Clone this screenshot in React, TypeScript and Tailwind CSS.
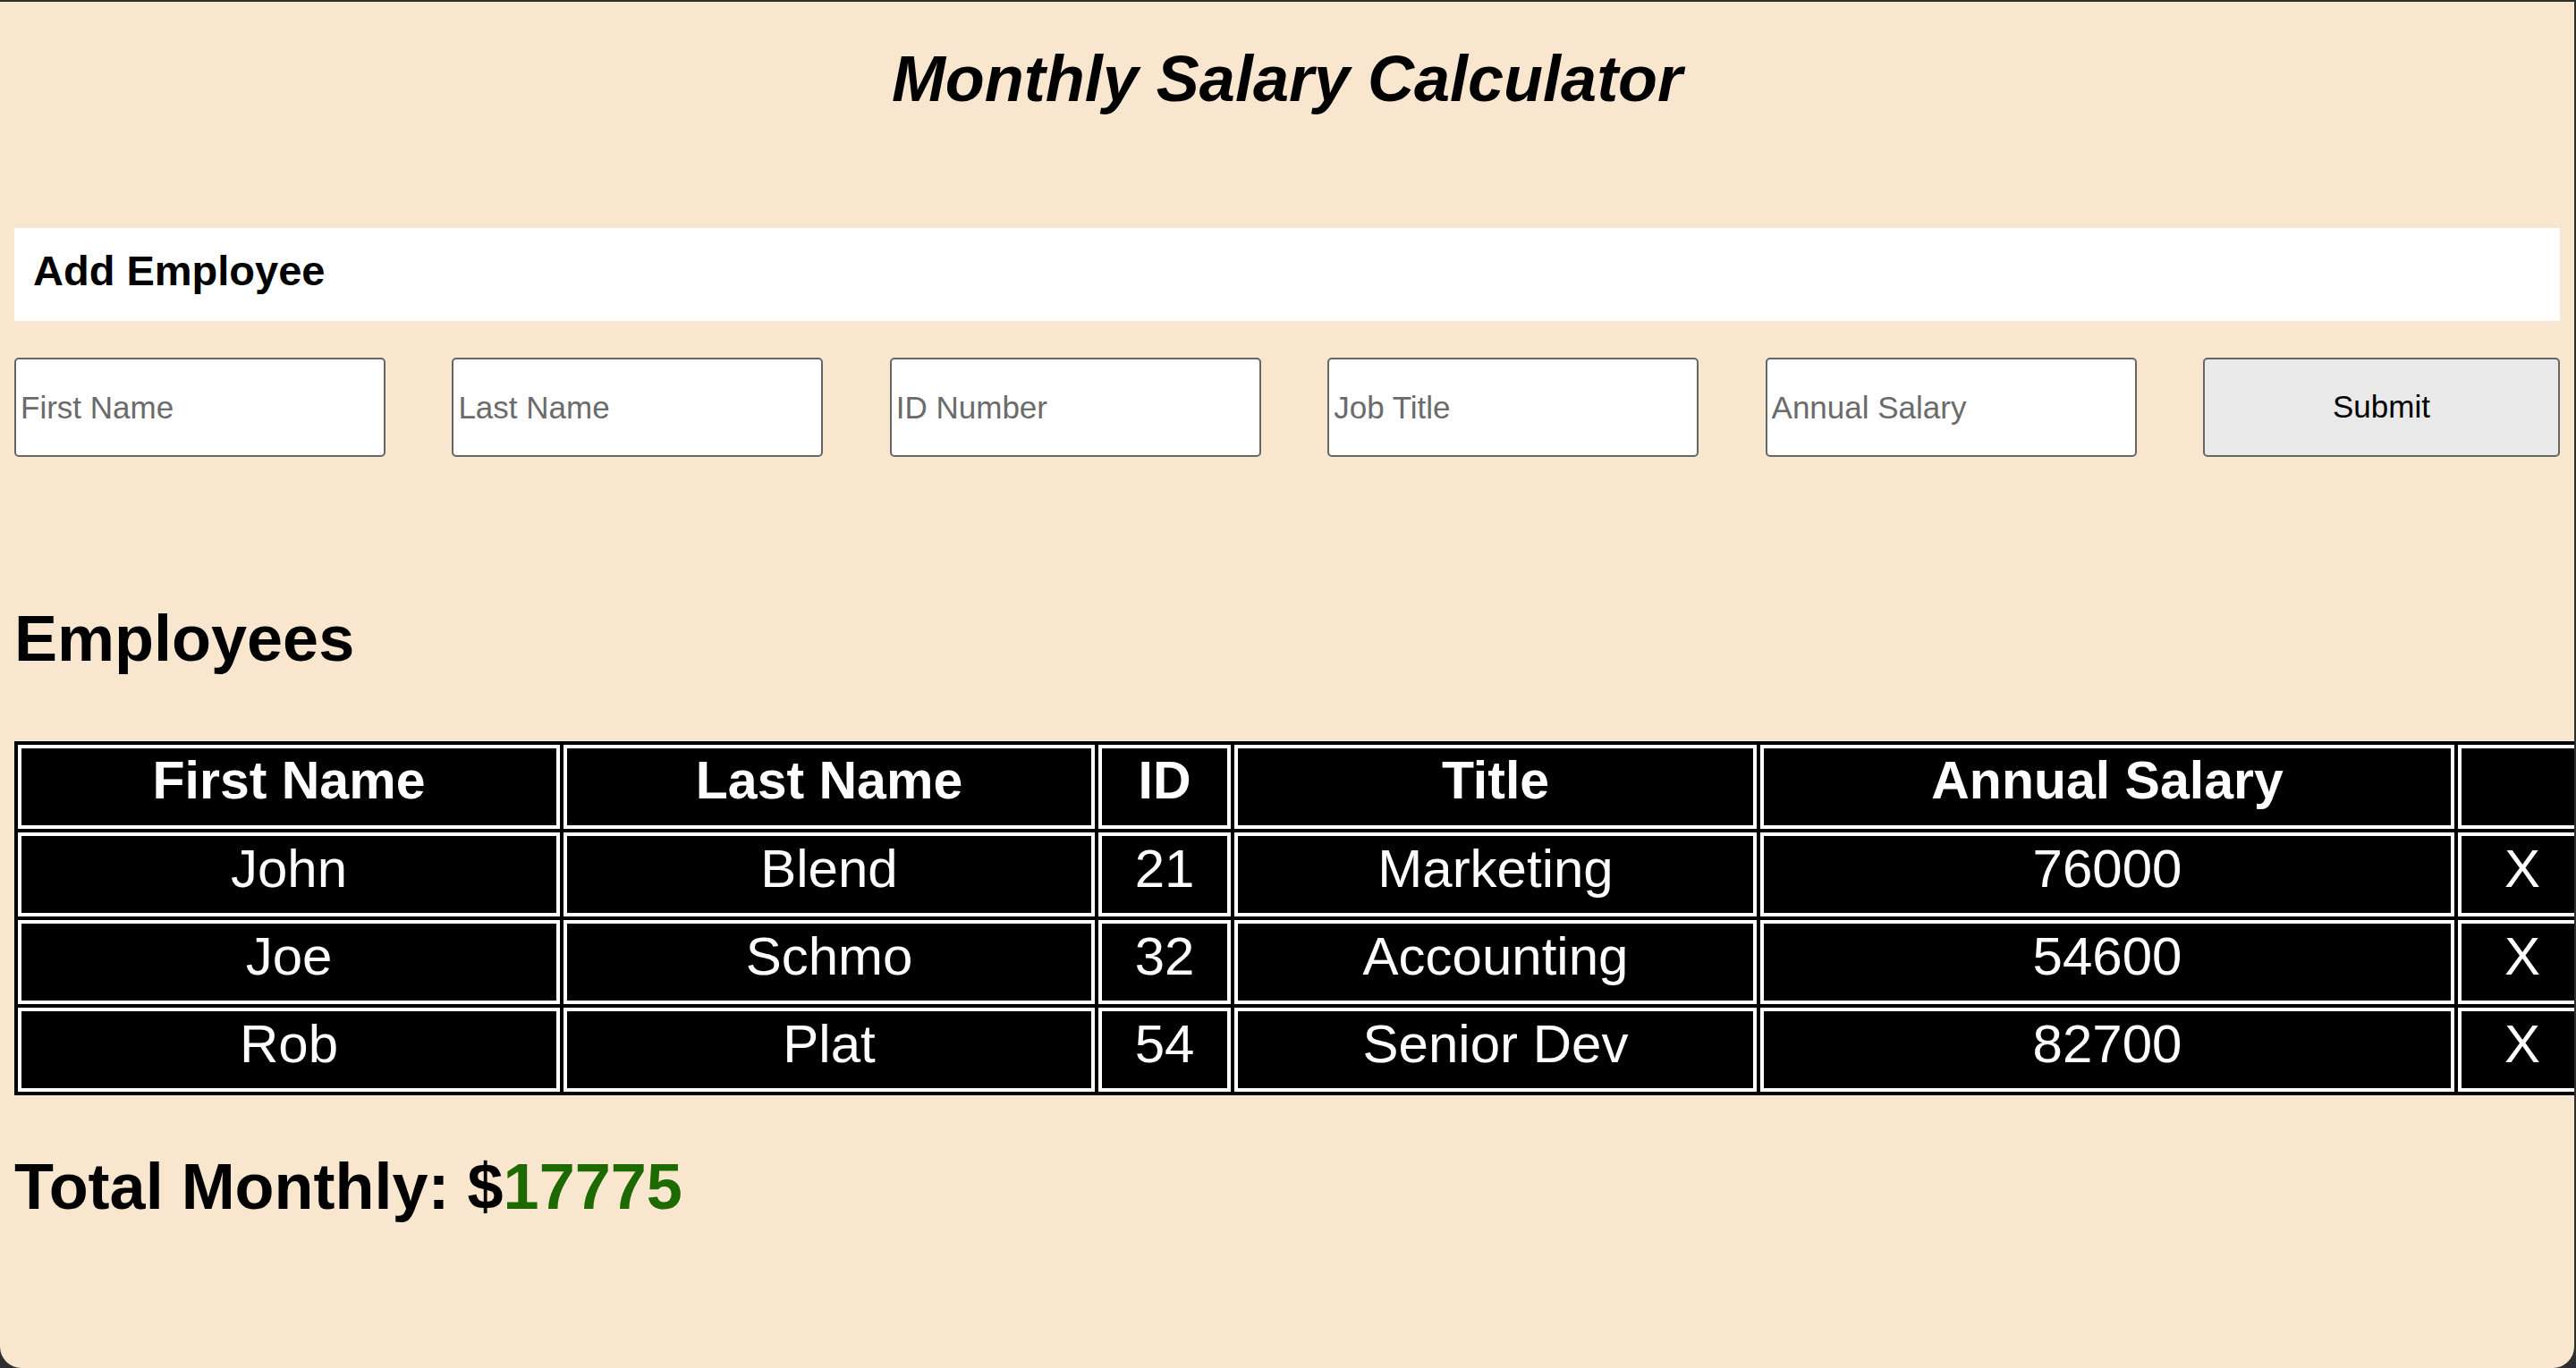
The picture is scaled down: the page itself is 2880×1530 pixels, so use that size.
import React from "react";

const employees = [
  { first: "John", last: "Blend", id: "21", title: "Marketing", salary: "76000" },
  { first: "Joe", last: "Schmo", id: "32", title: "Accounting", salary: "54600" },
  { first: "Rob", last: "Plat", id: "54", title: "Senior Dev", salary: "82700" },
];

const placeholders = ["First Name", "Last Name", "ID Number", "Job Title", "Annual Salary"];

export default function App() {
  return (
    <div className="w-[2880px] h-[1530px] bg-[#2e2e2e] overflow-hidden">
      <div className="mt-[2px] w-[2878px] h-[1528px] rounded-b-[24px] overflow-hidden bg-[#f8e6cf] text-black font-['Liberation_Sans',Arial,sans-serif]">
        <h1 className="pt-[45px] text-center text-[72px] leading-[83px] font-bold italic">
          Monthly Salary Calculator
        </h1>

        <div className="mx-4 mt-[125px] bg-white pl-[21px] pt-[21px] pb-[29px] text-[47px] leading-[54px] font-bold">
          Add Employee
        </div>

        <form className="mx-4 mt-[41px] flex justify-between" onSubmit={(e) => e.preventDefault()}>
          {placeholders.map((p) => (
            <input
              key={p}
              type="text"
              placeholder={p}
              className="w-[415px] h-[111px] border-2 border-[#666666] rounded-[5px] bg-white px-[5px] text-[35px] text-black placeholder:text-[#6b6b6b] outline-none font-['Liberation_Sans',Arial,sans-serif]"
            />
          ))}
          <button
            type="submit"
            className="w-[399px] h-[111px] border-2 border-[#666666] rounded-[5px] bg-[#e9e9e9] text-[35px] text-black font-['Liberation_Sans',Arial,sans-serif]"
          >
            Submit
          </button>
        </form>

        <h2 className="ml-4 mt-[162px] text-[72px] leading-[83px] font-bold">Employees</h2>

        <table className="ml-4 mt-[73px] w-[2880px] table-fixed border-separate border-spacing-[4px] bg-black">
          <colgroup>
            <col className="w-[606px]" />
            <col className="w-[594px]" />
            <col className="w-[148px]" />
            <col className="w-[584px]" />
            <col className="w-[776px]" />
            <col className="w-[144px]" />
          </colgroup>
          <thead>
            <tr>
              {["First Name", "Last Name", "ID", "Title", "Annual Salary", ""].map((h, i) => (
                <th
                  key={i}
                  className="border-4 border-white px-0 pt-[2px] pb-[15px] text-center text-white text-[59px] leading-[69px] font-bold"
                >
                  {h}
                </th>
              ))}
            </tr>
          </thead>
          <tbody>
            {employees.map((e) => (
              <tr key={e.id}>
                {[e.first, e.last, e.id, e.title, e.salary, "X"].map((v, i) => (
                  <td
                    key={i}
                    className="border-4 border-white px-0 pt-[2px] pb-[15px] text-center text-white text-[60px] leading-[69px]"
                  >
                    {v}
                  </td>
                ))}
              </tr>
            ))}
          </tbody>
        </table>

        <p className="ml-4 mt-[61px] text-[72px] leading-[83px] font-bold">
          Total Monthly: $<span className="text-[#1d6b00]">17775</span>
        </p>
      </div>
    </div>
  );
}
